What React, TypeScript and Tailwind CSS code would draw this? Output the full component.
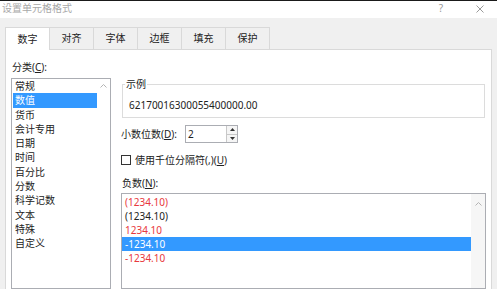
import React from "react";

const categories = ["常规", "数值", "货币", "会计专用", "日期", "时间", "百分比", "分数", "科学记数", "文本", "特殊", "自定义"];

const negatives = [
  { text: "(1234.10)", red: true },
  { text: "(1234.10)", red: false },
  { text: "1234.10", red: true },
  { text: "-1234.10", red: false, selected: true },
  { text: "-1234.10", red: true },
];

const tabs = ["数字", "对齐", "字体", "边框", "填充", "保护"];

function ChevronUp() {
  return (
    <svg width="7" height="4" viewBox="0 0 7 4">
      <path d="M0.5 3.5L3.5 0.5L6.5 3.5" stroke="#b4b4b4" strokeWidth="1" fill="none" />
    </svg>
  );
}

function Spinner() {
  return (
    <div className="flex w-[11px] flex-col border-l border-[#c8c8c8]">
      <div className="flex flex-1 items-center justify-center border-b border-[#c8c8c8] bg-[#f5f5f5]">
        <svg width="5" height="3" viewBox="0 0 5 3">
          <path d="M0 3L2.5 0L5 3Z" fill="#333" />
        </svg>
      </div>
      <div className="flex flex-1 items-center justify-center bg-[#f5f5f5]">
        <svg width="5" height="3" viewBox="0 0 5 3">
          <path d="M0 0L2.5 3L5 0Z" fill="#333" />
        </svg>
      </div>
    </div>
  );
}

export default function App() {
  return (
    <div className="h-[289px] w-[497px] overflow-hidden bg-[#f0f0f0] font-['Noto_Sans','Noto_Sans_CJK_SC',sans-serif] text-[10px] text-[#222]">
      {/* title bar */}
      <div className="flex h-[18px] items-start border-t border-[#1a1a1a] bg-white">
        <span className="pl-[2px] pt-[1px] leading-[12px] text-[#a8a8a8]">设置单元格格式</span>
        <span className="ml-auto pt-[1px] leading-[12px] text-[#999]">?</span>
        <svg className="ml-[33px] mr-[13px] mt-[4px]" width="8" height="8" viewBox="0 0 8 8">
          <path d="M0.5 0.5L7.5 7.5M7.5 0.5L0.5 7.5" stroke="#9a9a9a" strokeWidth="1" />
        </svg>
      </div>

      {/* tabs */}
      <div className="ml-[5px] flex w-[487px] pt-[9px]">
        {tabs.map((t, i) =>
          i === 0 ? (
            <div key={t} className="flex h-[23px] w-[45px] items-center justify-center border border-b-0 border-[#d9d9d9] bg-white">
              {t}
            </div>
          ) : (
            <div key={t} className="-ml-px flex h-[23px] w-[45px] items-center justify-center border border-[#d9d9d9]">
              {t}
            </div>
          )
        )}
        <div className="flex-1 border-b border-[#d9d9d9]" />
      </div>

      {/* panel */}
      <div className="ml-[5px] flex h-[239px] w-[487px] border-x border-[#d9d9d9] bg-white pl-[5px]">
        {/* category column */}
        <div className="flex w-[100px] flex-col">
          <div className="ml-[1px] mt-[10px] leading-[14px]">
            分类(<span className="underline">C</span>):
          </div>
          <div className="mt-[4px] flex h-[215px] border border-[#abadb3]">
            <div className="flex-1 pl-[1px]">
              {categories.map((c, i) => (
                <div
                  key={c}
                  className={
                    i === 1
                      ? "h-[14.3px] w-[84px] bg-[#3399ff] pl-[2px] leading-[14.3px] text-white"
                      : "h-[14.3px] w-[84px] pl-[2px] leading-[14.3px]"
                  }
                >
                  {c}
                </div>
              ))}
            </div>
            <div className="flex w-[13px] justify-center pt-[5px]">
              <ChevronUp />
            </div>
          </div>
        </div>

        {/* right column */}
        <div className="ml-[10px] flex flex-col">
          <fieldset className="ml-[1px] mt-[28px] w-[363px] border border-[#dcdcdc]">
            <legend className="ml-[2px] px-[1px] leading-[12px]">示例</legend>
            <div className="pb-[5px] pl-[6px] pt-[8px] leading-[14px]">62170016300055400000.00</div>
          </fieldset>

          <div className="mt-[7px] flex h-[18px] items-center">
            <span className="w-[64px] leading-[14px]">
              小数位数(<span className="underline">D</span>):
            </span>
            <div className="flex h-[18px] w-[53px] border border-[#abadb3]">
              <span className="flex-1 pl-[2px] leading-[16px]">2</span>
              <Spinner />
            </div>
          </div>

          <div className="mt-[10px] flex h-[14px] items-center gap-[4px]">
            <div className="h-[10px] w-[10px] border border-[#333]" />
            <span className="leading-[14px]">
              使用千位分隔符(,)(<span className="underline">U</span>)
            </span>
          </div>

          <div className="ml-[1px] mt-[9px] leading-[14px]">
            负数(<span className="underline">N</span>):
          </div>

          <div className="mt-[3px] flex h-[100px] w-[365px] border border-[#abadb3]">
            <div className="flex-1 pt-[1px]">
              {negatives.map((n, i) => (
                <div
                  key={i}
                  className={
                    n.selected
                      ? "h-[14px] bg-[#3399ff] pl-[3px] leading-[14px] text-white"
                      : n.red
                      ? "h-[14px] pl-[3px] leading-[14px] text-[#e8383d]"
                      : "h-[14px] pl-[3px] leading-[14px]"
                  }
                >
                  {n.text}
                </div>
              ))}
            </div>
            <div className="flex w-[14px] justify-center bg-[#f6f6f6] pt-[8px]">
              <ChevronUp />
            </div>
          </div>
        </div>
      </div>
    </div>
  );
}
